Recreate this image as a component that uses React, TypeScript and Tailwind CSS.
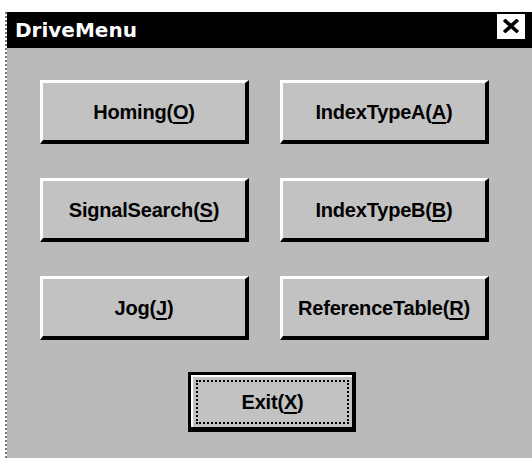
import type { ReactNode } from 'react';

// Scanned Win95-style "DriveMenu" dialog: black caption, bevelled gray buttons.

type Item = { label: string; key: string };

const items: Item[] = [
  { label: 'Homing', key: 'O' },
  { label: 'IndexTypeA', key: 'A' },
  { label: 'SignalSearch', key: 'S' },
  { label: 'IndexTypeB', key: 'B' },
  { label: 'Jog', key: 'J' },
  { label: 'ReferenceTable', key: 'R' },
];

function Caption({ label, k }: { label: string; k: string }) {
  return (
    <span className="whitespace-nowrap text-[20px] font-bold leading-none tracking-[-0.2px] text-black">
      {label}(<span className="underline decoration-2 underline-offset-[3px]">{k}</span>)
    </span>
  );
}

function Bevel({ children }: { children: ReactNode }) {
  return (
    <button
      type="button"
      className="flex h-[64px] w-[209px] items-center justify-center border-t-[3px] border-r-[4px] border-b-[4px] border-l-[3px] border-t-white border-r-black border-b-black border-l-white bg-[#c2c2c2]"
    >
      {children}
    </button>
  );
}

function CloseGlyph() {
  return (
    <svg width="16" height="14" viewBox="0 0 16 14" aria-hidden>
      <path d="M2.5 2 L13.5 12 M13.5 2 L2.5 12" stroke="black" strokeWidth="3.6" strokeLinecap="square" />
    </svg>
  );
}

export default function App() {
  return (
    <div
      className="h-[458px] w-[532px] overflow-hidden bg-white pt-[12px] pl-[5px]"
      style={{ fontFamily: '"Liberation Sans", Arial, sans-serif' }}
    >
      <div className="flex h-[446px] flex-col border-l-2 border-dotted border-[#777]">
        <div className="flex h-[36px] items-center justify-between bg-black pr-[7px] pl-[8px]">
          <span
            className="text-[20px] font-bold leading-none text-white"
            style={{ fontFamily: '"DejaVu Sans", sans-serif' }}
          >
            DriveMenu
          </span>
          <span className="mb-[8px] flex h-[25px] w-[28px] items-center justify-center bg-white">
            <CloseGlyph />
          </span>
        </div>
        <div className="flex flex-1 flex-col bg-[#bababa] pt-[32px] pl-[33px]">
          <div className="grid w-[449px] grid-cols-[209px_209px] gap-x-[31px] gap-y-[34px]">
            {items.map((it) => (
              <Bevel key={it.key}>
                <Caption label={it.label} k={it.key} />
              </Bevel>
            ))}
          </div>
          <button
            type="button"
            className="mt-[32px] ml-[148px] h-[60px] w-[168px] border-t-[3px] border-r-[4px] border-b-[5px] border-l-[3px] border-black bg-[#c2c2c2]"
          >
            <div className="flex h-full w-full items-center justify-center border-t-2 border-l-2 border-white p-[3px]">
              <div className="flex h-full w-full items-center justify-center border-2 border-dotted border-black">
                <Caption label="Exit" k="X" />
              </div>
            </div>
          </button>
        </div>
      </div>
    </div>
  );
}
